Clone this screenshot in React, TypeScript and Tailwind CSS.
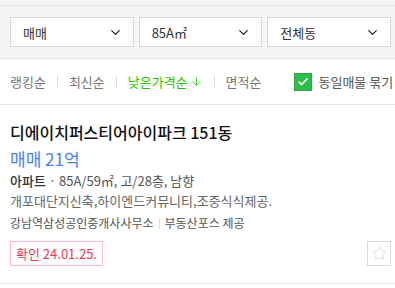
import { ChevronDown, Check, ArrowDown, Star } from "lucide-react";

const font = { fontFamily: '"Noto Sans CJK KR", "Noto Sans", sans-serif' };

const filters = ["매매", "85A㎡", "전체동"];
const sorts = ["랭킹순", "최신순", "낮은가격순", "면적순"];

const App = () => {
  return (
    <div className="w-[395px] h-[288px] bg-white overflow-hidden" style={font}>
      {/* Filter bar */}
      <div className="bg-[#f5f5f5] pt-[5px] border-b border-[#e3e3e3]">
        <div className="border-t border-[#e3e3e3] grid grid-cols-3 gap-[5px] pl-[10px] pr-[4px] py-[11px]">
          {filters.map((f) => (
            <div
              key={f}
              className="h-[30px] bg-white border border-[#d6d6d6] flex items-center justify-between pl-[12px] pr-[10px]"
            >
              <span className="text-[13px] leading-none text-[#333]">{f}</span>
              <ChevronDown className="w-[15px] h-[15px] text-[#222]" strokeWidth={2} />
            </div>
          ))}
        </div>
      </div>

      {/* Sort row */}
      <div className="h-[46px] flex items-center pl-[10px] border-b border-[#e8e8e8] whitespace-nowrap">
        {sorts.map((s, i) => (
          <div key={s} className="flex items-center">
            {i > 0 && <span className="w-px h-[11px] bg-[#dcdcdc] mx-[11px]" />}
            <span
              className={`text-[13px] leading-none flex items-center ${
                s === "낮은가격순" ? "text-[#1ec800]" : "text-[#777]"
              }`}
            >
              {s}
              {s === "낮은가격순" && <ArrowDown className="w-[13px] h-[13px] ml-[2px]" strokeWidth={1.5} />}
            </span>
          </div>
        ))}
        <div className="flex items-center ml-[33px]">
          <span className="w-[18px] h-[18px] bg-[#2fbe4b] border border-[#27a83f] flex items-center justify-center">
            <Check className="w-[12px] h-[12px] text-white" strokeWidth={3.5} />
          </span>
          <span className="ml-[6px] text-[13px] leading-none text-[#555]">동일매물 묶기</span>
        </div>
      </div>

      {/* Listing */}
      <div className="pl-[10px] pr-[4px] pt-[17px] border-b border-[#e8e8e8] h-[179px] flex flex-col">
        <div className="text-[16px] leading-[20px] font-medium text-[#111]">디에이치퍼스티어아이파크 151동</div>
        <div className="mt-[6px] text-[17px] leading-[22px] text-[#4a7ff5]">매매 21억</div>
        <div className="mt-[2px] text-[13px] leading-[18px] text-[#555]">
          <span className="text-[#333] font-medium">아파트</span> · 85A/59㎡, 고/28층, 남향
        </div>
        <div className="mt-[2px] text-[13px] leading-[18px] text-[#666]">개포대단지신축,하이엔드커뮤니티,조중식식제공.</div>
        <div className="mt-[4px] text-[12px] leading-[18px] text-[#555] flex items-center">
          강남역삼성공인중개사사무소
          <span className="w-px h-[11px] bg-[#dcdcdc] mx-[5px]" />
          부동산포스 제공
        </div>
        <div className="mt-[9px] flex items-center justify-between">
          <span className="h-[25px] px-[5px] border border-[#ffbcc2] text-[#f0364f] text-[13px] leading-none flex items-center">
            확인 24.01.25.
          </span>
          <span className="w-[24px] h-[25px] border border-[#d9d9d9] flex items-center justify-center">
            <Star className="w-[15px] h-[15px] text-[#cfcfcf]" strokeWidth={1.2} />
          </span>
        </div>
      </div>
    </div>
  );
};

export default App;
